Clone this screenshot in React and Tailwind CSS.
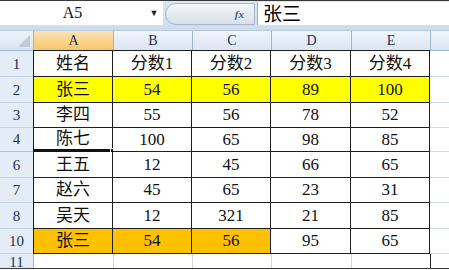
import React from "react";

const cols = ["A", "B", "C", "D", "E"];
const widths = ["w-[80px]", "w-[79px]", "w-[79px]", "w-[80px]", "w-[79px]"];

const rows = [
  { n: "1", h: "h-[26px]", cells: ["姓名", "分数1", "分数2", "分数3", "分数4"] },
  { n: "2", h: "h-[26px]", cells: ["张三", "54", "56", "89", "100"], fill: ["bg-[#ffff00]", "bg-[#ffff00]", "bg-[#ffff00]", "bg-[#ffff00]", "bg-[#ffff00]"] },
  { n: "3", h: "h-[25px]", cells: ["李四", "55", "56", "78", "52"] },
  { n: "4", h: "h-[24px]", cells: ["陈七", "100", "65", "98", "85"], sel: true },
  { n: "6", h: "h-[26px]", cells: ["王五", "12", "45", "66", "65"] },
  { n: "7", h: "h-[25px]", cells: ["赵六", "45", "65", "23", "31"] },
  { n: "8", h: "h-[26px]", cells: ["吴天", "12", "321", "21", "85"] },
  { n: "10", h: "h-[25px]", cells: ["张三", "54", "56", "95", "65"], fill: ["bg-[#ffc000]", "bg-[#ffc000]", "bg-[#ffc000]", "", ""] },
];

const font = "font-['Liberation_Serif','Noto_Sans_CJK_SC',serif]";

function Toolbar() {
  return (
    <div className="flex h-[30px] border-t border-[#3a3a3a] bg-gradient-to-b from-[#dbe6f4] to-[#cfdcee]">
      <div className="flex h-[24px] w-[145px] items-center justify-center bg-white text-[16px] text-[#111] font-['Liberation_Serif',serif]">
        A5
      </div>
      <div className="flex h-[24px] w-[18px] items-center justify-center bg-white">
        <span className="text-[9px] text-[#222]">▼</span>
      </div>
      <div className="ml-[2px] mt-[2px] flex h-[22px] w-[90px] items-center justify-end rounded-l-full border border-[#aab8cc] bg-gradient-to-b from-[#f4f6f9] to-[#d9e0ea] pr-[10px]">
        <span className="text-[11px] italic font-bold text-[#4a5e7e] font-['Liberation_Serif',serif]">fx</span>
      </div>
      <div className="ml-[2px] mt-[1px] flex h-[23px] flex-1 items-center border-l border-[#9fb0c6] bg-white pl-[5px] text-[19px] text-black font-['Noto_Sans_CJK_SC',sans-serif]">
        张三
      </div>
    </div>
  );
}

function HeaderRow() {
  return (
    <div className="flex h-[21px] border-t border-[#b9c9dd]">
      <div className="relative w-[34px] border-r border-b border-[#9eb6ce] bg-gradient-to-b from-[#eef3fa] to-[#dae4f1]">
        <svg className="absolute bottom-[3px] right-[3px]" width="12" height="12" viewBox="0 0 12 12">
          <polygon points="12,0 12,12 0,12" fill="#bfcbdb" />
        </svg>
      </div>
      {cols.map((c, i) => (
        <div
          key={c}
          className={`${widths[i]} flex items-center justify-center border-r border-b border-[#9eb6ce] text-[14px] text-[#1c3359] ${font} ${
            i === 0
              ? "bg-gradient-to-b from-[#fbe3b1] to-[#f4c667]"
              : "bg-gradient-to-b from-[#f1f5fb] to-[#dce5f2]"
          }`}
        >
          {c}
        </div>
      ))}
      <div className="flex-1 border-b border-[#9eb6ce] bg-gradient-to-b from-[#f1f5fb] to-[#dce5f2]"></div>
    </div>
  );
}

function DataRow({ r, first }) {
  return (
    <div className={`flex ${r.h}`}>
      <div
        className={`flex w-[34px] items-end justify-center pb-[1px] border-r border-[#9eb6ce] bg-[#e4ecf7] text-[15px] text-[#1c3359] ${font} ${
          r.sel ? "border-b border-b-[#f0b860]" : "border-b border-b-[#c5d3e4]"
        }`}
      >
        {r.n}
      </div>
      {r.cells.map((t, i) => (
        <div
          key={i}
          className={`relative ${widths[i]} flex items-center justify-center border-r border-b border-[#1e1e1e] text-[17px] text-[#111] ${font} ${
            i === 0 ? "border-l border-l-[#1e1e1e] -ml-px" : ""
          } ${first ? "border-t border-t-[#1e1e1e] -mt-px" : ""} ${
            r.fill && r.fill[i] ? r.fill[i] : "bg-white"
          } ${r.sel && i === 0 ? "border-b-[3px] border-b-[#111]" : ""}`}
        >
          {t}
          {r.sel && i === 0 && (
            <div className="absolute -bottom-[4px] -right-[3px] h-[5px] w-[5px] border border-white bg-[#111]"></div>
          )}
        </div>
      ))}
      <div className="flex-1 border-b border-[#d0d7e5] bg-white"></div>
    </div>
  );
}

export default function App() {
  return (
    <div className="h-[270px] w-[449px] overflow-hidden bg-white">
      <Toolbar />
      <HeaderRow />
      {rows.map((r, i) => (
        <DataRow key={r.n} r={r} first={i === 0} />
      ))}
      <div className="flex h-[15px] border-b border-[#3a3a3a]">
        <div className={`flex w-[34px] items-start justify-center border-r border-[#9eb6ce] bg-[#e4ecf7] text-[15px] leading-[16px] text-[#1c3359] ${font}`}>
          11
        </div>
        {cols.map((c, i) => (
          <div
            key={c}
            className={`${widths[i]} border-r ${i === 4 ? "border-[#1e1e1e]" : "border-[#d0d7e5]"} bg-white`}
          ></div>
        ))}
        <div className="flex-1 bg-white"></div>
      </div>
    </div>
  );
}
